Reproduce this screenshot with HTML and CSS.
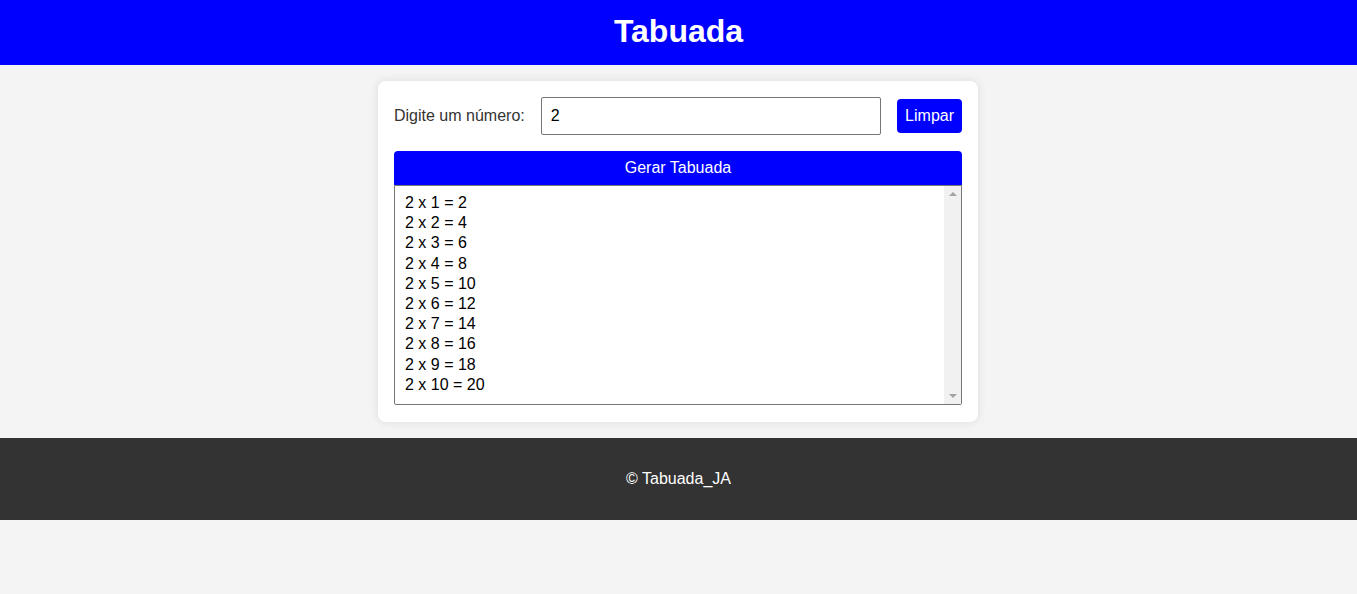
FILE: index.html
```html
<!DOCTYPE html>
<html lang="pt-BR">
<head>
<meta charset="utf-8">
<title>Tabuada</title>
<link rel="stylesheet" href="styles.css">
</head>
<body>
<header class="site-header">
  <h1 class="title">Tabuada</h1>
</header>
<main class="card">
  <div class="input-row">
    <label class="label" for="numero">Digite um número:</label>
    <input class="number-input" id="numero" type="text" value="2">
    <button class="btn btn-clear" type="button">Limpar</button>
  </div>
  <button class="btn btn-generate" type="button">Gerar Tabuada</button>
  <div class="result-wrap">
    <textarea class="result" readonly>2 x 1 = 2
2 x 2 = 4
2 x 3 = 6
2 x 4 = 8
2 x 5 = 10
2 x 6 = 12
2 x 7 = 14
2 x 8 = 16
2 x 9 = 18
2 x 10 = 20</textarea>
    <div class="fake-scrollbar" aria-hidden="true">
      <span class="arrow arrow-up"></span>
      <span class="arrow arrow-down"></span>
    </div>
  </div>
</main>
<footer class="site-footer">
  <p class="copy">© Tabuada_JA</p>
</footer>
</body>
</html>
```
FILE: styles.css
```css
html, body {
  margin: 0;
  padding: 0;
}
body {
  background: #f4f4f4;
  font-family: "Liberation Sans", Arial, sans-serif;
  font-size: 16px;
  color: #333;
}
.site-header {
  background: #0000ff;
  height: 65px;
  display: flex;
  align-items: center;
  justify-content: center;
}
.title {
  margin: 0;
  color: #fff;
  font-size: 32px;
  font-weight: bold;
  line-height: 37px;
  padding-bottom: 2px;
}
.card {
  width: 600px;
  box-sizing: border-box;
  margin: 16px auto;
  margin-left: calc(50% - 300.5px);
  background: #fff;
  border-radius: 8px;
  padding: 16px 16px 17px;
  box-shadow: 0 0 10px rgba(0, 0, 0, 0.1);
  display: flex;
  flex-direction: column;
}
.input-row {
  display: flex;
  align-items: center;
  gap: 16px;
  margin-bottom: 16px;
}
.label {
  color: #333;
  white-space: nowrap;
}
.number-input {
  flex: 1;
  min-width: 0;
  height: 38px;
  box-sizing: border-box;
  border: 1px solid #767676;
  border-radius: 2px;
  padding: 0 9px;
  font-family: "Liberation Sans", Arial, sans-serif;
  font-size: 16px;
  color: #000;
}
.btn {
  background: #0000ff;
  color: #fff;
  border: none;
  border-radius: 4px;
  font-family: "Liberation Sans", Arial, sans-serif;
  font-size: 16px;
  line-height: 18px;
  padding: 8px;
  cursor: pointer;
}
.btn-clear {
  height: 34px;
}
.btn-generate {
  width: 100%;
  height: 34px;
  border-radius: 4px 4px 0 0;
}
.result-wrap {
  position: relative;
}
.result {
  display: block;
  width: 100%;
  height: 220px;
  box-sizing: border-box;
  border: 1px solid #767676;
  border-radius: 0 0 2px 2px;
  padding: 7px 27px 7px 10px;
  font-family: "Liberation Sans", Arial, sans-serif;
  font-size: 16px;
  line-height: 20.2px;
  color: #000;
  resize: none;
  overflow-y: auto;
  margin: 0;
}
.fake-scrollbar {
  position: absolute;
  top: 1px;
  right: 1px;
  bottom: 1px;
  width: 17px;
  background: #f1f1f1;
  display: flex;
  flex-direction: column;
  justify-content: space-between;
  align-items: center;
  padding: 6px 0;
  box-sizing: border-box;
}
.arrow {
  width: 0;
  height: 0;
  border-left: 4px solid transparent;
  border-right: 4px solid transparent;
}
.arrow-up {
  border-bottom: 4px solid #a3a3a3;
}
.arrow-down {
  border-top: 4px solid #a3a3a3;
}
.site-footer {
  background: #333;
  color: #fff;
  text-align: center;
  padding: 32px 0;
}
.copy {
  margin: 0;
  line-height: 18px;
}
```
